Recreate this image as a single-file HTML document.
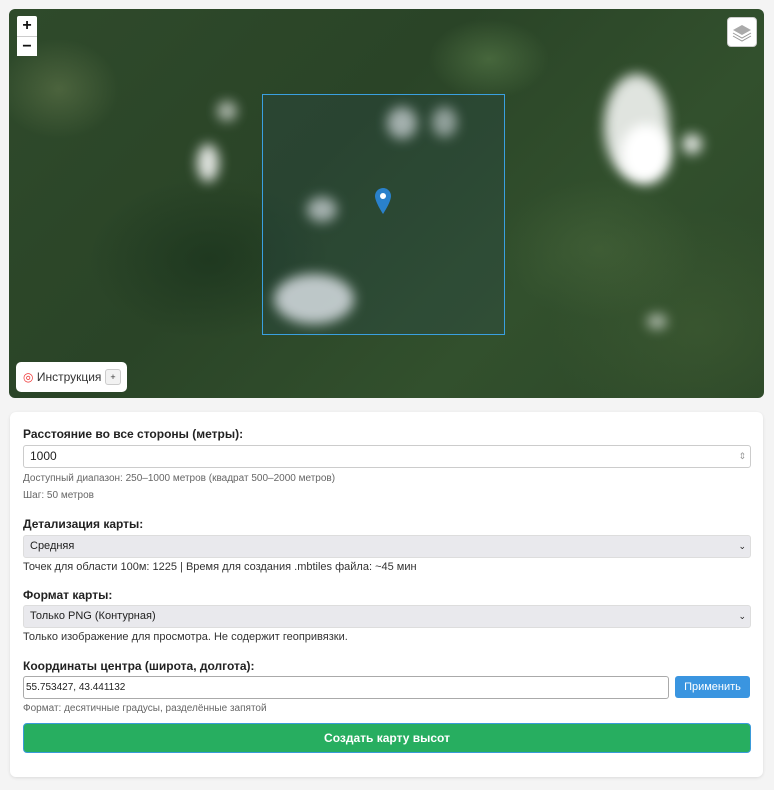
<!DOCTYPE html>
<html><head><meta charset="utf-8"><style>
*{box-sizing:border-box;margin:0;padding:0}
body{width:774px;height:790px;background:#f4f4f4;font-family:"Liberation Sans","DejaVu Sans",sans-serif;position:relative;overflow:hidden;color:#222}
#map{position:absolute;left:9px;top:9px;width:755px;height:389px;border-radius:6px;overflow:hidden;
background:
radial-gradient(ellipse 60px 50px at 50px 80px,rgba(120,140,90,.4),transparent),
radial-gradient(ellipse 60px 40px at 480px 50px,rgba(110,150,90,.4),transparent),
radial-gradient(ellipse 120px 80px at 200px 250px,rgba(20,45,25,.5),transparent),
radial-gradient(ellipse 100px 70px at 590px 240px,rgba(90,120,70,.3),transparent),
radial-gradient(ellipse 150px 120px at 690px 320px,rgba(80,110,60,.3),transparent),
linear-gradient(135deg,#2f4a2b,#2a4427 40%,#32502d 70%,#2c4728);}
.cl{position:absolute;background:#fff;border-radius:50%;filter:blur(6px);opacity:.85}
#sq{position:absolute;left:253px;top:85px;width:243px;height:241px;border:1.5px solid #3aa0e0;background:rgba(40,70,100,.18)}
.zb{position:absolute;left:17px;width:20px;height:20px;background:#fff;font:bold 16px "Liberation Sans";text-align:center;line-height:20px;color:#111}
.lbl{position:absolute;left:23px;font-size:12px;font-weight:bold;color:#222}
.inp{position:absolute;left:23px;width:728px;height:23px;border:1px solid #ccc;border-radius:3px;background:#fff;font-size:11px;padding-left:6px;line-height:21px}
.sel{background:#e9e9ed;border-color:#ddd}
.hint{position:absolute;left:23px;font-size:10px;color:#666}
.txt{position:absolute;left:23px;font-size:11px;color:#333}
.chev{position:absolute;right:4px;top:0;font-size:9px}
</style></head><body>
<div id="map">
 <div class="cl" style="left:595px;top:65px;width:65px;height:105px"></div>
 <div class="cl" style="left:612px;top:115px;width:50px;height:60px;opacity:1"></div>
 <div class="cl" style="left:673px;top:125px;width:20px;height:20px"></div>
 <div class="cl" style="left:188px;top:135px;width:22px;height:38px"></div>
 <div class="cl" style="left:208px;top:92px;width:20px;height:20px;opacity:.6"></div>
 <div class="cl" style="left:378px;top:98px;width:30px;height:32px;opacity:.7"></div>
 <div class="cl" style="left:423px;top:98px;width:25px;height:30px;opacity:.6"></div>
 <div class="cl" style="left:298px;top:188px;width:30px;height:25px;opacity:.7"></div>
 <div class="cl" style="left:265px;top:265px;width:80px;height:50px"></div>
 <div class="cl" style="left:638px;top:305px;width:20px;height:15px;opacity:.6"></div>
 <div id="sq"></div>
 <svg style="position:absolute;left:366px;top:179px" width="16" height="26" viewBox="0 0 16 26"><path d="M8 0C3.6 0 0 3.6 0 8c0 6 8 18 8 18s8-12 8-18C16 3.6 12.4 0 8 0z" fill="#2a81cb"/><circle cx="8" cy="8" r="3" fill="#fff"/></svg>
 <div style="position:absolute;left:718px;top:8px;width:30px;height:30px;background:#fff;border-radius:4px;border:1px solid #ccc">
  <svg width="28" height="28" viewBox="0 0 28 28"><path d="M14 7l9 5-9 5-9-5z" fill="#aaa"/><path d="M5 15l9 5 9-5M5 18l9 5 9-5" stroke="#999" fill="none"/></svg></div>
 <div style="position:absolute;left:7px;top:353px;width:111px;height:30px;background:#fff;border-radius:5px;font-size:12px;line-height:30px;padding-left:7px;color:#333"><span style="color:#e33">◎</span> Инструкция
  <span style="position:absolute;left:89px;top:7px;width:16px;height:16px;border:1px solid #ccc;border-radius:3px;background:#f2f2f2;font-size:9px;line-height:14px;text-align:center">+</span></div>
</div>
<div class="zb" style="top:16px;border-radius:2px 2px 0 0">+</div>
<div class="zb" style="top:36px;border-top:1px solid #ccc">−</div>
<div style="position:absolute;left:10px;top:412px;width:753px;height:365px;background:#fff;border-radius:6px;box-shadow:0 1px 3px rgba(0,0,0,.1)"></div>
<div class="lbl" style="top:427px">Расстояние во все стороны (метры):</div>
<div class="inp" style="top:445px;font-size:12px">1000<span class="chev" style="color:#999">⇕</span></div>
<div class="hint" style="top:473px">Доступный диапазон: 250–1000 метров (квадрат 500–2000 метров)</div>
<div class="hint" style="top:490px">Шаг: 50 метров</div>
<div class="lbl" style="top:517px">Детализация карты:</div>
<div class="inp sel" style="top:535px">Средняя<span class="chev">⌄</span></div>
<div class="txt" style="top:561px">Точек для области 100м: 1225 | Время для создания .mbtiles файла: ~45 мин</div>
<div class="lbl" style="top:588px">Формат карты:</div>
<div class="inp sel" style="top:605px">Только PNG (Контурная)<span class="chev">⌄</span></div>
<div class="txt" style="top:631px">Только изображение для просмотра. Не содержит геопривязки.</div>
<div class="lbl" style="top:659px">Координаты центра (широта, долгота):</div>
<div class="inp" style="top:676px;width:646px;font-size:10px;padding-left:2px;border-color:#aaa">55.753427, 43.441132</div>
<div style="position:absolute;left:675px;top:676px;width:75px;height:22px;background:#3a95e0;border-radius:3px;color:#fff;font-size:11px;text-align:center;line-height:22px">Применить</div>
<div class="hint" style="top:703px">Формат: десятичные градусы, разделённые запятой</div>
<div style="position:absolute;left:23px;top:723px;width:728px;height:30px;background:#27ae60;border-radius:4px;border:1px solid #3a9ad9;color:#fff;font-size:12px;font-weight:bold;text-align:center;line-height:28px">Создать карту высот</div>
</body></html>
